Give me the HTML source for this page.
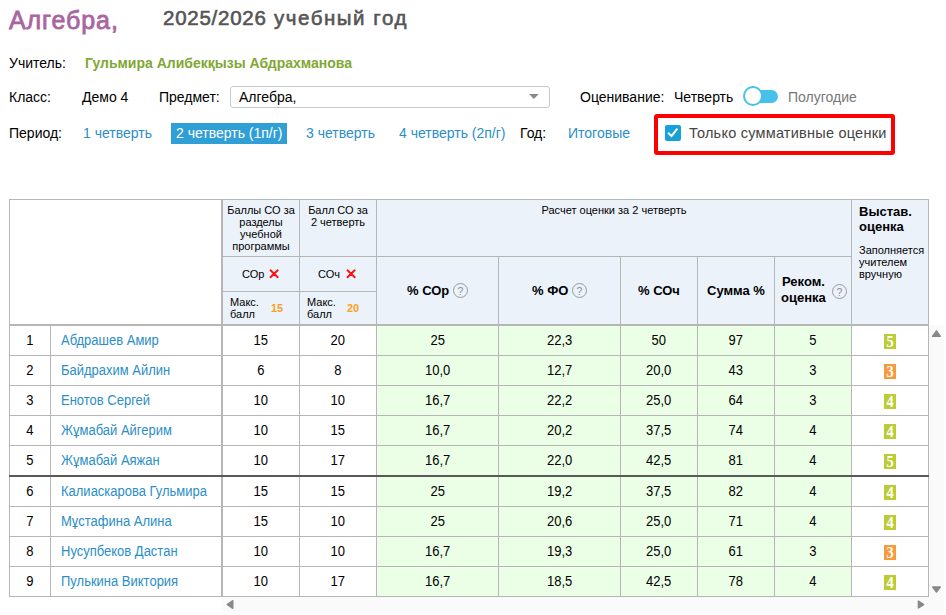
<!DOCTYPE html><html lang="ru"><head><meta charset="utf-8"><title>Алгебра</title><style>html,body{margin:0;padding:0;background:#fff}
body{width:946px;height:615px;overflow:hidden;position:relative;font-family:"Liberation Sans",Arial,sans-serif;font-size:14px;color:#000}
.a{position:absolute;white-space:nowrap;line-height:16px}
.bl{color:#2b8ec6}
#t1{left:9px;top:3.5px;font-size:25px;line-height:32px;font-weight:normal;-webkit-text-stroke:0.8px #a9659f;color:#a9659f;letter-spacing:0.9px}
#t2{left:163px;top:4.5px;font-size:20.5px;line-height:26px;font-weight:normal;-webkit-text-stroke:0.6px #555;color:#555;letter-spacing:1.55px}
#t2 b{font-weight:normal;letter-spacing:0.75px}
#tn{left:85px;top:55px;font-weight:bold;color:#7fa835}
#sel{position:absolute;left:230px;top:86px;width:318px;height:20px;border:1px solid #c6cace;border-radius:3px;background:#fff}
#pill{position:absolute;left:171px;top:123px;width:116px;height:21px;background:#2f9fd5}
#tog{position:absolute;left:748px;top:90px;width:30px;height:13px;border-radius:6.5px;background:#46c1ea}
#knob{position:absolute;left:743px;top:86px;width:16px;height:16px;border:2px solid #46c1ea;border-radius:50%;background:#fff}
#red{position:absolute;left:654px;top:114px;width:233px;height:33px;border:4px solid #fe0000;border-radius:3px}
#cb{position:absolute;left:665px;top:125px;width:16px;height:16px;border-radius:2px;background:#16a2d9}
#grid{position:absolute;left:0;top:0;width:946px;height:615px}
.hbg{position:absolute;background:#ecf2fa}
.gbg{position:absolute;background:#eaffe5}
.sb{position:absolute;background:#fafafa}
.l{position:absolute;background:#b6b6b6;display:block}
.l.dk{background:#595959}
.c{position:absolute;height:29px;line-height:29px;text-align:center;white-space:nowrap;font-size:14px}
.c span{display:inline-block;transform:scaleX(.928);transform-origin:50% 50%}
.c.nm span{transform-origin:0 50%}
.c.nm{text-align:left;color:#2b8ec6}
.gr{position:absolute;width:12px;height:15px;line-height:15px;text-align:center;color:#fff;font-family:"Liberation Serif",serif;font-weight:bold;font-size:16px}
.gr span{display:inline-block;transform:scaleX(.9)}
.g45{background:#bccc34}
.g3{background:#f79a3b}
.h{position:absolute;font-size:11px;line-height:12px;text-align:center}
.hb{position:absolute;font-size:13px;line-height:15px;font-weight:bold;white-space:nowrap}
.or{color:#ff9f1a;font-weight:bold}
.q{position:absolute;width:13px;height:13px;border:1px solid #9a9a9a;border-radius:50%;font-size:10.5px;line-height:14px;text-align:center;color:#8e8e8e}
</style></head><body>
<div class="a" id="t1">Алгебра,</div>
<div class="a" id="t2"><b>2025/2026</b> учебный год</div>
<div class="a" style="left:9px;top:55px">Учитель:</div>
<div class="a" id="tn">Гульмира Алибекқызы Абдрахманова</div>
<div class="a" style="left:9px;top:89px">Класс:</div>
<div class="a" style="left:82px;top:89px">Демо 4</div>
<div class="a" style="left:159px;top:89px">Предмет:</div>
<div id="sel"></div>
<div class="a" style="left:239px;top:89px">Алгебра,</div>
<svg style="position:absolute;left:529px;top:94px" width="10" height="6" viewBox="0 0 10 6"><path d="M0 0 L9.8 0 L4.9 5.1 Z" fill="#888"/></svg>
<div class="a" style="left:580px;top:89px">Оценивание:</div>
<div class="a" style="left:674px;top:89px">Четверть</div>
<div id="tog"></div><div id="knob"></div>
<div class="a" style="left:788px;top:89px;color:#777">Полугодие</div>
<div class="a" style="left:9px;top:125px">Период:</div>
<div class="a bl" style="left:83px;top:125px">1 четверть</div>
<div id="pill"></div>
<div class="a" style="left:176px;top:125px;color:#fff">2 четверть (1п/г)</div>
<div class="a bl" style="left:306px;top:125px">3 четверть</div>
<div class="a bl" style="left:399px;top:125px">4 четверть (2п/г)</div>
<div class="a" style="left:520px;top:125px">Год:</div>
<div class="a bl" style="left:568px;top:125px">Итоговые</div>
<div id="red"></div>
<div id="cb"></div>
<svg style="position:absolute;left:665px;top:125px" width="16" height="16" viewBox="0 0 16 16"><path d="M3.1 7.8 L6.5 11 L12.4 3.7" fill="none" stroke="#fff" stroke-width="2" stroke-linecap="butt" stroke-linejoin="miter"/></svg>
<div class="a" style="left:689px;top:125px;color:#444;font-size:14.5px;letter-spacing:0.23px">Только суммативные оценки</div>

<div id="grid">
<div class="hbg" style="left:223px;top:200px;width:705px;height:124px"></div>
<div class="gbg" style="left:377px;top:326px;width:474px;height:270px"></div>
<div class="sb" style="left:929px;top:325px;width:15px;height:272px"></div>
<div class="sb" style="left:222px;top:597px;width:722px;height:15px"></div>
<svg style="position:absolute;left:0;top:0" width="946" height="615" viewBox="0 0 946 615"><g fill="#888" stroke="#888" stroke-width="1.4" stroke-linejoin="round">
<path d="M936.45 330.8 L940.4 336.3 L932.5 336.3 Z"/>
<path d="M936.5 592.1 L940.3 587 L932.7 587 Z"/>
<path d="M227.2 604.5 L232.8 600.7 L232.8 608.3 Z"/>
<path d="M923.7 604.55 L918.4 601.1 L918.4 608 Z"/>
</g></svg>

<i class="l " style="left:9px;top:199px;width:1px;height:398px"></i>
<i class="l " style="left:928px;top:199px;width:1px;height:398px"></i>
<i class="l " style="left:50px;top:326px;width:1px;height:271px"></i>
<i class="l " style="left:221px;top:199px;width:2px;height:398px"></i>
<i class="l " style="left:299px;top:199px;width:1px;height:398px"></i>
<i class="l " style="left:376px;top:199px;width:1px;height:398px"></i>
<i class="l " style="left:498px;top:257px;width:1px;height:340px"></i>
<i class="l " style="left:620px;top:257px;width:1px;height:340px"></i>
<i class="l " style="left:697px;top:257px;width:1px;height:340px"></i>
<i class="l " style="left:774px;top:257px;width:1px;height:340px"></i>
<i class="l " style="left:851px;top:199px;width:1px;height:398px"></i>
<i class="l " style="left:9px;top:199px;width:920px;height:1px"></i>
<i class="l " style="left:223px;top:256px;width:628px;height:1px"></i>
<i class="l " style="left:223px;top:291px;width:153px;height:1px"></i>
<i class="l " style="left:9px;top:324px;width:920px;height:2px"></i>
<i class="l " style="left:9px;top:355px;width:920px;height:1px"></i>
<i class="l " style="left:9px;top:385px;width:920px;height:1px"></i>
<i class="l " style="left:9px;top:415px;width:920px;height:1px"></i>
<i class="l " style="left:9px;top:445px;width:920px;height:1px"></i>
<i class="l " style="left:9px;top:506px;width:920px;height:1px"></i>
<i class="l " style="left:9px;top:536px;width:920px;height:1px"></i>
<i class="l " style="left:9px;top:566px;width:920px;height:1px"></i>
<i class="l " style="left:9px;top:596px;width:920px;height:1px"></i>
<i class="l dk" style="left:9px;top:475px;width:920px;height:2px"></i>
<div class="h" style="left:223px;top:204px;width:76px">Баллы СО за разделы учебной программы</div>
<div class="h" style="left:300px;top:204px;width:76px">Балл СО за 2&nbsp;четверть</div>
<div class="h" style="left:377px;top:204px;width:474px">Расчет оценки за 2 четверть</div>
<div class="hb" style="left:859px;top:204px">Выстав.<br>оценка</div>
<div class="h" style="left:859px;top:244px;text-align:left;line-height:12px">Заполняется<br>учителем<br>вручную</div>
<div class="h" style="left:242px;top:268px;white-space:nowrap">СОр</div>
<div class="h" style="left:318px;top:268px;white-space:nowrap">СОч</div>
<div class="h" style="left:230px;top:296px;text-align:left">Макс.<br>балл</div>
<div class="h" style="left:307px;top:296px;text-align:left">Макс.<br>балл</div>
<div class="h or" style="left:271px;top:302px">15</div>
<div class="h or" style="left:347px;top:302px">20</div>
<div class="hb" style="left:407px;top:283px">% СОр</div>
<div class="hb" style="left:532px;top:283px">% ФО</div>
<div class="hb" style="left:638px;top:283px">% СОч</div>
<div class="hb" style="left:707px;top:283px">Сумма %</div>
<div class="hb" style="left:781px;top:274px;line-height:16px"><span style="margin-left:1px">Реком.</span><br>оценка</div>
<div class="q" style="left:453px;top:283px">?</div>
<div class="q" style="left:572px;top:283px">?</div>
<div class="q" style="left:832px;top:284px">?</div>
<svg style="position:absolute;left:269px;top:269px" width="10" height="10" viewBox="0 0 10 10"><path d="M1.5 1.3 L8.7 8.2 M8.7 1.3 L1.5 8.2" stroke="#fb1212" stroke-width="1.9" stroke-linecap="round"/></svg>
<svg style="position:absolute;left:346px;top:269px" width="10" height="10" viewBox="0 0 10 10"><path d="M1.5 1.3 L8.7 8.2 M8.7 1.3 L1.5 8.2" stroke="#fb1212" stroke-width="1.9" stroke-linecap="round"/></svg>

<div class="c n" style="left:10px;top:326px;width:40px"><span>1</span></div>
<div class="c nm" style="left:61px;top:326px;width:168px"><span>Абдрашев Амир</span></div>
<div class="c" style="left:223px;top:326px;width:76px"><span>15</span></div>
<div class="c" style="left:300px;top:326px;width:76px"><span>20</span></div>
<div class="c" style="left:377px;top:326px;width:121px"><span>25</span></div>
<div class="c" style="left:499px;top:326px;width:121px"><span>22,3</span></div>
<div class="c" style="left:621px;top:326px;width:76px"><span>50</span></div>
<div class="c" style="left:698px;top:326px;width:76px"><span>97</span></div>
<div class="c" style="left:775px;top:326px;width:76px"><span>5</span></div>
<div class="gr g45" style="left:884px;top:334px"><span>5</span></div>
<div class="c n" style="left:10px;top:356px;width:40px"><span>2</span></div>
<div class="c nm" style="left:61px;top:356px;width:168px"><span>Байдрахим Айлин</span></div>
<div class="c" style="left:223px;top:356px;width:76px"><span>6</span></div>
<div class="c" style="left:300px;top:356px;width:76px"><span>8</span></div>
<div class="c" style="left:377px;top:356px;width:121px"><span>10,0</span></div>
<div class="c" style="left:499px;top:356px;width:121px"><span>12,7</span></div>
<div class="c" style="left:621px;top:356px;width:76px"><span>20,0</span></div>
<div class="c" style="left:698px;top:356px;width:76px"><span>43</span></div>
<div class="c" style="left:775px;top:356px;width:76px"><span>3</span></div>
<div class="gr g3" style="left:884px;top:364px"><span>3</span></div>
<div class="c n" style="left:10px;top:386px;width:40px"><span>3</span></div>
<div class="c nm" style="left:61px;top:386px;width:168px"><span>Енотов Сергей</span></div>
<div class="c" style="left:223px;top:386px;width:76px"><span>10</span></div>
<div class="c" style="left:300px;top:386px;width:76px"><span>10</span></div>
<div class="c" style="left:377px;top:386px;width:121px"><span>16,7</span></div>
<div class="c" style="left:499px;top:386px;width:121px"><span>22,2</span></div>
<div class="c" style="left:621px;top:386px;width:76px"><span>25,0</span></div>
<div class="c" style="left:698px;top:386px;width:76px"><span>64</span></div>
<div class="c" style="left:775px;top:386px;width:76px"><span>3</span></div>
<div class="gr g45" style="left:884px;top:394px"><span>4</span></div>
<div class="c n" style="left:10px;top:416px;width:40px"><span>4</span></div>
<div class="c nm" style="left:61px;top:416px;width:168px"><span>Жұмабай Айгерим</span></div>
<div class="c" style="left:223px;top:416px;width:76px"><span>10</span></div>
<div class="c" style="left:300px;top:416px;width:76px"><span>15</span></div>
<div class="c" style="left:377px;top:416px;width:121px"><span>16,7</span></div>
<div class="c" style="left:499px;top:416px;width:121px"><span>20,2</span></div>
<div class="c" style="left:621px;top:416px;width:76px"><span>37,5</span></div>
<div class="c" style="left:698px;top:416px;width:76px"><span>74</span></div>
<div class="c" style="left:775px;top:416px;width:76px"><span>4</span></div>
<div class="gr g45" style="left:884px;top:424px"><span>4</span></div>
<div class="c n" style="left:10px;top:446px;width:40px"><span>5</span></div>
<div class="c nm" style="left:61px;top:446px;width:168px"><span>Жұмабай Аяжан</span></div>
<div class="c" style="left:223px;top:446px;width:76px"><span>10</span></div>
<div class="c" style="left:300px;top:446px;width:76px"><span>17</span></div>
<div class="c" style="left:377px;top:446px;width:121px"><span>16,7</span></div>
<div class="c" style="left:499px;top:446px;width:121px"><span>22,0</span></div>
<div class="c" style="left:621px;top:446px;width:76px"><span>42,5</span></div>
<div class="c" style="left:698px;top:446px;width:76px"><span>81</span></div>
<div class="c" style="left:775px;top:446px;width:76px"><span>4</span></div>
<div class="gr g45" style="left:884px;top:454px"><span>5</span></div>
<div class="c n" style="left:10px;top:477px;width:40px"><span>6</span></div>
<div class="c nm" style="left:61px;top:477px;width:168px"><span>Калиаскарова Гульмира</span></div>
<div class="c" style="left:223px;top:477px;width:76px"><span>15</span></div>
<div class="c" style="left:300px;top:477px;width:76px"><span>15</span></div>
<div class="c" style="left:377px;top:477px;width:121px"><span>25</span></div>
<div class="c" style="left:499px;top:477px;width:121px"><span>19,2</span></div>
<div class="c" style="left:621px;top:477px;width:76px"><span>37,5</span></div>
<div class="c" style="left:698px;top:477px;width:76px"><span>82</span></div>
<div class="c" style="left:775px;top:477px;width:76px"><span>4</span></div>
<div class="gr g45" style="left:884px;top:485px"><span>4</span></div>
<div class="c n" style="left:10px;top:507px;width:40px"><span>7</span></div>
<div class="c nm" style="left:61px;top:507px;width:168px"><span>Мұстафина Алина</span></div>
<div class="c" style="left:223px;top:507px;width:76px"><span>15</span></div>
<div class="c" style="left:300px;top:507px;width:76px"><span>10</span></div>
<div class="c" style="left:377px;top:507px;width:121px"><span>25</span></div>
<div class="c" style="left:499px;top:507px;width:121px"><span>20,6</span></div>
<div class="c" style="left:621px;top:507px;width:76px"><span>25,0</span></div>
<div class="c" style="left:698px;top:507px;width:76px"><span>71</span></div>
<div class="c" style="left:775px;top:507px;width:76px"><span>4</span></div>
<div class="gr g45" style="left:884px;top:515px"><span>4</span></div>
<div class="c n" style="left:10px;top:537px;width:40px"><span>8</span></div>
<div class="c nm" style="left:61px;top:537px;width:168px"><span>Нусупбеков Дастан</span></div>
<div class="c" style="left:223px;top:537px;width:76px"><span>10</span></div>
<div class="c" style="left:300px;top:537px;width:76px"><span>10</span></div>
<div class="c" style="left:377px;top:537px;width:121px"><span>16,7</span></div>
<div class="c" style="left:499px;top:537px;width:121px"><span>19,3</span></div>
<div class="c" style="left:621px;top:537px;width:76px"><span>25,0</span></div>
<div class="c" style="left:698px;top:537px;width:76px"><span>61</span></div>
<div class="c" style="left:775px;top:537px;width:76px"><span>3</span></div>
<div class="gr g3" style="left:884px;top:545px"><span>3</span></div>
<div class="c n" style="left:10px;top:567px;width:40px"><span>9</span></div>
<div class="c nm" style="left:61px;top:567px;width:168px"><span>Пулькина Виктория</span></div>
<div class="c" style="left:223px;top:567px;width:76px"><span>10</span></div>
<div class="c" style="left:300px;top:567px;width:76px"><span>17</span></div>
<div class="c" style="left:377px;top:567px;width:121px"><span>16,7</span></div>
<div class="c" style="left:499px;top:567px;width:121px"><span>18,5</span></div>
<div class="c" style="left:621px;top:567px;width:76px"><span>42,5</span></div>
<div class="c" style="left:698px;top:567px;width:76px"><span>78</span></div>
<div class="c" style="left:775px;top:567px;width:76px"><span>4</span></div>
<div class="gr g45" style="left:884px;top:575px"><span>4</span></div>
</div></body></html>
